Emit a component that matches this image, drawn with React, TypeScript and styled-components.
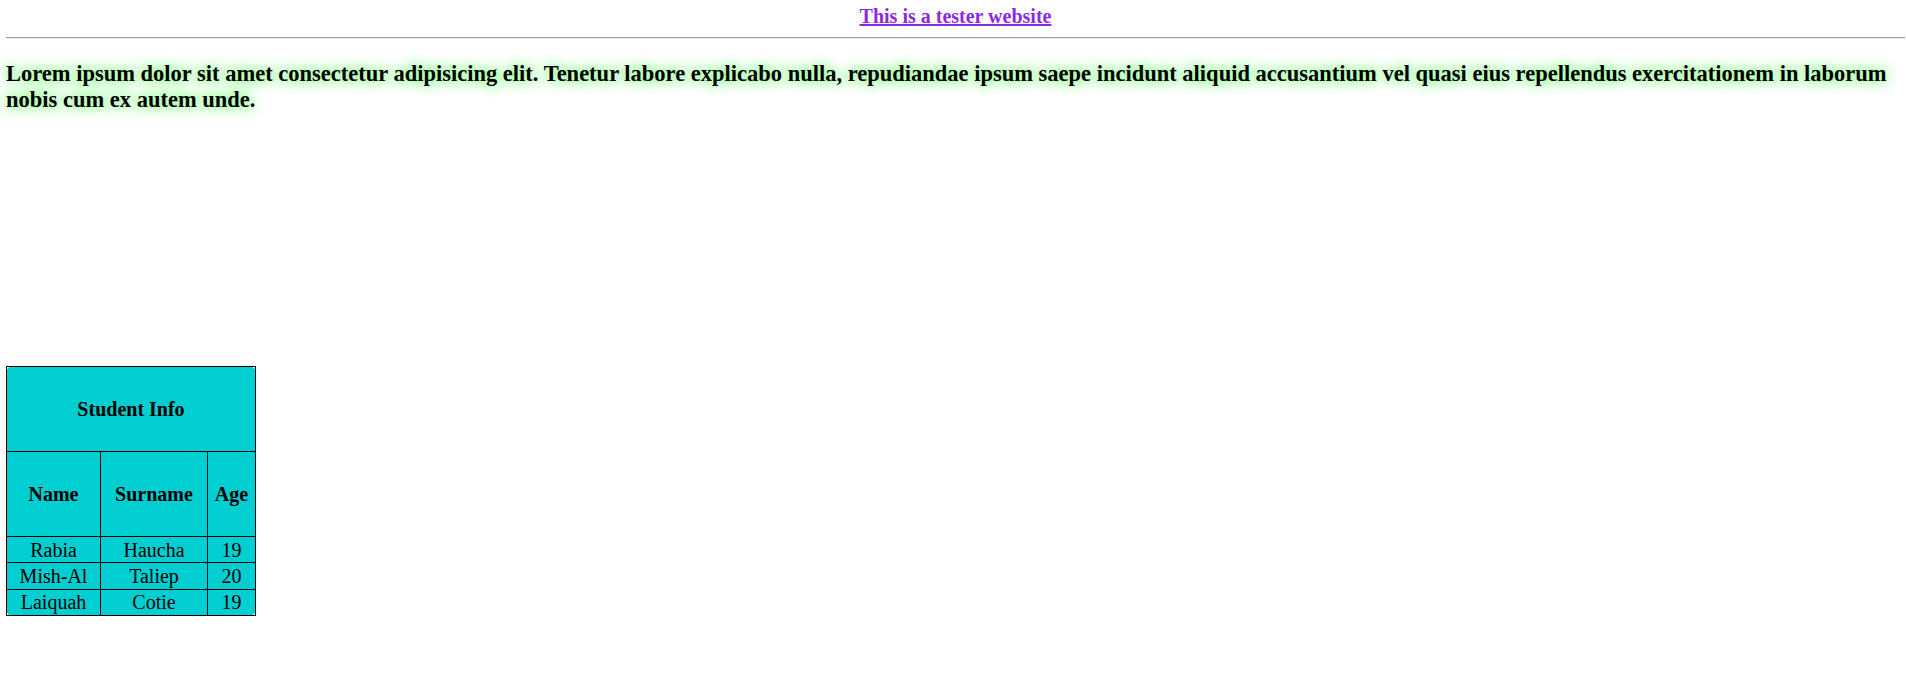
import React from "react";
import styled, { createGlobalStyle } from "styled-components";

const GlobalStyle = createGlobalStyle`
  html, body {
    margin: 0;
    padding: 0;
    background: #ffffff;
  }
  body {
    font-family: "Liberation Serif", "Times New Roman", serif;
    font-size: 20px;
    color: #000000;
  }
`;

const Page = styled.div`
  padding: 0 1px 0 6px;
`;

const Title = styled.div`
  text-align: center;
  font-size: 20px;
  font-weight: bold;
  line-height: 23px;
  padding-top: 5px;
`;

const TitleLink = styled.a`
  color: #8a2be2;
  text-decoration: underline;
`;

const Rule = styled.hr`
  margin: 9px 0 0 0;
  border: none;
  border-top: 1px solid #9a9a9a;
  border-bottom: 1px solid #eeeeee;
  height: 0;
`;

const Lorem = styled.p`
  margin: 22px 0 0 0;
  font-size: 22.5px;
  font-weight: bold;
  line-height: 26px;
  text-shadow: 0 0 13px #22ff22;
`;

const TableFrame = styled.div`
  margin-top: 253px;
  width: 250px;
  background: #00ced1;
  border-radius: 7px;
`;

const Table = styled.table`
  width: 250px;
  height: 250px;
  border-collapse: collapse;
  border: 1px solid #000000;
  font-size: 20px;
`;

const HeadRow = styled.tr<{ $h: number }>`
  height: ${(p) => p.$h}px;
`;

const HeadCell = styled.th<{ $w?: number }>`
  border: 1px solid #000000;
  font-weight: bold;
  text-align: center;
  padding: 0;
  ${(p) => (p.$w ? `width: ${p.$w}px;` : "")}
`;

const DataRow = styled.tr`
  height: 26px;
`;

const Cell = styled.td`
  border: 1px solid #000000;
  text-align: center;
  padding: 0;
  line-height: 22px;
`;

const students = [
  { name: "Rabia", surname: "Haucha", age: 19 },
  { name: "Mish-Al", surname: "Taliep", age: 20 },
  { name: "Laiquah", surname: "Cotie", age: 19 },
];

export default function App() {
  return (
    <>
      <GlobalStyle />
      <Page>
        <Title>
          <TitleLink href="#">This is a tester website</TitleLink>
        </Title>
        <Rule />
        <Lorem>
          Lorem ipsum dolor sit amet consectetur adipisicing elit. Tenetur labore explicabo
          nulla, repudiandae ipsum saepe incidunt aliquid accusantium vel quasi eius
          repellendus exercitationem in laborum nobis cum ex autem unde.
        </Lorem>
        <TableFrame>
          <Table>
            <thead>
              <HeadRow $h={85}>
                <HeadCell colSpan={3}>Student Info</HeadCell>
              </HeadRow>
              <HeadRow $h={85}>
                <HeadCell $w={93}>Name</HeadCell>
                <HeadCell $w={106}>Surname</HeadCell>
                <HeadCell>Age</HeadCell>
              </HeadRow>
            </thead>
            <tbody>
              {students.map((s) => (
                <DataRow key={s.name}>
                  <Cell>{s.name}</Cell>
                  <Cell>{s.surname}</Cell>
                  <Cell>{s.age}</Cell>
                </DataRow>
              ))}
            </tbody>
          </Table>
        </TableFrame>
      </Page>
    </>
  );
}
